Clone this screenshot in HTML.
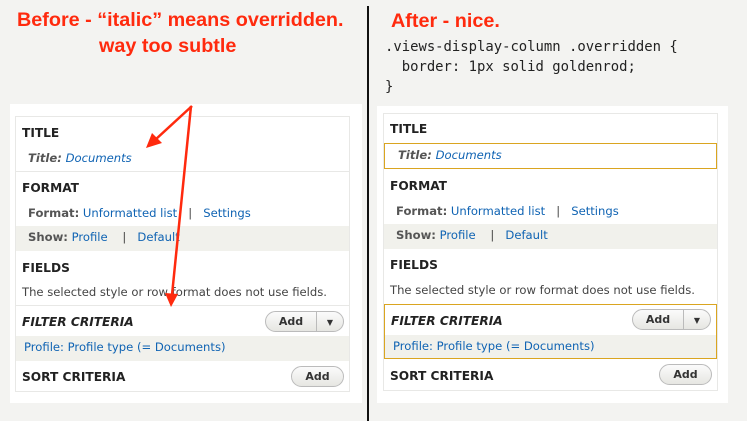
<!DOCTYPE html>
<html><head><style>
*{margin:0;padding:0;box-sizing:border-box}
body{width:747px;height:421px;background:#f3f3f1;position:relative;overflow:hidden;font-family:"DejaVu Sans","Liberation Sans",sans-serif}
.a{position:absolute}
.red{color:#ff2a0e;font-weight:bold;font-size:19.8px;white-space:nowrap;font-family:"Liberation Sans",sans-serif}
.code{font-family:"DejaVu Sans Mono","Liberation Mono",monospace;font-size:13.9px;color:#222;white-space:pre;line-height:20px}
.panel{background:#fff}
.box{border:1px solid #e8e8e6;background:#fff}
.h{font-weight:bold;font-size:12.2px;color:#222;white-space:nowrap}
.t{font-size:11.6px;color:#444;white-space:nowrap}
.t b{color:#555}
.l{color:#0f63b3}
.gray{background:#f1f1ec}
.sep{border-top:1px solid #e8e8e6}
.btn{border:1px solid #bbb;border-radius:11px;background:linear-gradient(#fbfbfb,#e6e6e2);font-size:11px;font-weight:bold;color:#333;text-align:center;line-height:19px;height:21px}
.gold{border:1px solid #daa520}
</style></head><body>
<div class="a red" style="left:17px;top:9px">Before - “italic” means overridden.</div>
<div class="a red" style="left:99px;top:35px">way too subtle</div>
<div class="a" style="left:367px;top:6px;width:2px;height:415px;background:#111"></div>
<div class="a red" style="left:391px;top:10px">After - nice.</div>
<div class="a code" style="left:385px;top:37px">.views-display-column .overridden {
  border: 1px solid goldenrod;
}</div>

<!-- left panel -->
<div class="a panel" style="left:10px;top:104px;width:352px;height:299px"></div>
<div class="a box" style="left:15px;top:116px;width:335px;height:276px"></div>
<div class="a h" style="left:22px;top:126px">TITLE</div>
<div class="a t" style="left:28px;top:151px"><i><b>Title:</b> <span class="l">Documents</span></i></div>
<div class="a sep" style="left:16px;top:171px;width:333px"></div>
<div class="a h" style="left:22px;top:181px">FORMAT</div>
<div class="a t" style="left:28px;top:206px"><b>Format:</b> <span class="l">Unformatted list</span> &nbsp;&nbsp;| &nbsp;&nbsp;<span class="l">Settings</span></div>
<div class="a gray" style="left:16px;top:226px;width:333px;height:25px"></div>
<div class="a t" style="left:28px;top:230px"><b>Show:</b> <span class="l">Profile</span> &nbsp;&nbsp;&nbsp;| &nbsp;&nbsp;<span class="l">Default</span></div>
<div class="a h" style="left:22px;top:261px">FIELDS</div>
<div class="a t" style="left:22px;top:285px">The selected style or row format does not use fields.</div>
<div class="a sep" style="left:16px;top:305px;width:333px"></div>
<div class="a h" style="left:22px;top:315px;font-style:italic">FILTER CRITERIA</div>
<div class="a btn" style="left:265px;top:311px;width:79px"><span style="display:inline-block;width:51px;border-right:1px solid #bbb">Add</span><span style="display:inline-block;width:26px;font-size:8px">▼</span></div>
<div class="a gray" style="left:16px;top:336px;width:333px;height:25px"></div>
<div class="a t" style="left:24px;top:340px"><span class="l">Profile: Profile type (= Documents)</span></div>
<div class="a h" style="left:22px;top:370px">SORT CRITERIA</div>
<div class="a btn" style="left:291px;top:366px;width:53px">Add</div>

<svg class="a" style="left:0;top:0" width="370" height="421">
<g stroke="#ff2a0e" stroke-width="2.5" fill="#ff2a0e">
<line x1="192" y1="106" x2="155" y2="140"/>
<line x1="191" y1="106" x2="172" y2="295"/>
<polygon points="146,148 152,133 162,143" stroke="none"/>
<polygon points="171,307 165,293 178,294" stroke="none"/>
</g></svg>

<!-- right panel -->
<div class="a panel" style="left:377px;top:106px;width:351px;height:297px"></div>
<div class="a box" style="left:383px;top:113px;width:335px;height:278px"></div>
<div class="a h" style="left:390px;top:122px">TITLE</div>
<div class="a gold" style="left:384px;top:143px;width:333px;height:26px"></div>
<div class="a t" style="left:398px;top:148px"><i><b>Title:</b> <span class="l">Documents</span></i></div>
<div class="a h" style="left:390px;top:179px">FORMAT</div>
<div class="a t" style="left:396px;top:204px"><b>Format:</b> <span class="l">Unformatted list</span> &nbsp;&nbsp;| &nbsp;&nbsp;<span class="l">Settings</span></div>
<div class="a gray" style="left:384px;top:224px;width:333px;height:25px"></div>
<div class="a t" style="left:396px;top:228px"><b>Show:</b> <span class="l">Profile</span> &nbsp;&nbsp;&nbsp;| &nbsp;&nbsp;<span class="l">Default</span></div>
<div class="a h" style="left:390px;top:258px">FIELDS</div>
<div class="a t" style="left:390px;top:283px">The selected style or row format does not use fields.</div>
<div class="a gold" style="left:384px;top:304px;width:333px;height:55px;background:#fff"></div>
<div class="a gray" style="left:385px;top:335px;width:331px;height:23px"></div>
<div class="a h" style="left:391px;top:314px;font-style:italic">FILTER CRITERIA</div>
<div class="a btn" style="left:632px;top:309px;width:79px"><span style="display:inline-block;width:51px;border-right:1px solid #bbb">Add</span><span style="display:inline-block;width:26px;font-size:8px">▼</span></div>
<div class="a t" style="left:393px;top:339px"><span class="l">Profile: Profile type (= Documents)</span></div>
<div class="a h" style="left:390px;top:369px">SORT CRITERIA</div>
<div class="a btn" style="left:659px;top:364px;width:53px">Add</div>
</body></html>
